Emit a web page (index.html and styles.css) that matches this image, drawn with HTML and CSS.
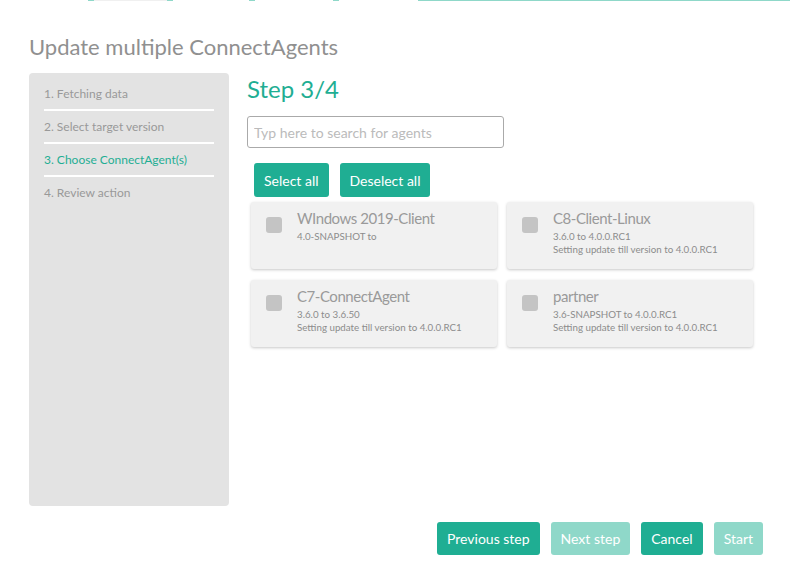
FILE: index.html
```html
<!DOCTYPE html>
<html lang="en">
<head>
  <meta charset="UTF-8" />
  <title>Update multiple ConnectAgents</title>
  <link rel="stylesheet" href="styles.css">
</head>
<body>

  <div class="topline">
    <span class="tick"></span>
    <span class="track"></span>
    <span class="tick"></span>
    <span class="gap g1"></span>
    <span class="tick"></span>
    <span class="gap g2"></span>
    <span class="tick"></span>
    <span class="gap g3"></span>
    <span class="rest"></span>
  </div>

  <h1 class="page-title">Update multiple ConnectAgents</h1>

  <div class="wizard">
    <div class="steps">
      <div class="step">1. Fetching data</div>
      <div class="step">2. Select target version</div>
      <div class="step active">3. Choose ConnectAgent(s)</div>
      <div class="step last">4. Review action</div>
    </div>

    <div class="content">
      <h2 class="step-title">Step 3/4</h2>
      <input class="search" type="text" placeholder="Typ here to search for agents" />

      <div class="select-btns">
        <button class="btn">Select all</button>
        <button class="btn">Deselect all</button>
      </div>

      <div class="agents">
        <div class="agent">
          <span class="check"></span>
          <div class="agent-info">
            <div class="agent-name">WIndows 2019-Client</div>
            <div class="agent-line">4.0-SNAPSHOT to</div>
          </div>
        </div>
        <div class="agent">
          <span class="check"></span>
          <div class="agent-info">
            <div class="agent-name">C8-Client-Linux</div>
            <div class="agent-line">3.6.0 to 4.0.0.RC1</div>
            <div class="agent-line">Setting update till version to 4.0.0.RC1</div>
          </div>
        </div>
        <div class="agent">
          <span class="check"></span>
          <div class="agent-info">
            <div class="agent-name">C7-ConnectAgent</div>
            <div class="agent-line">3.6.0 to 3.6.50</div>
            <div class="agent-line">Setting update till version to 4.0.0.RC1</div>
          </div>
        </div>
        <div class="agent">
          <span class="check"></span>
          <div class="agent-info">
            <div class="agent-name">partner</div>
            <div class="agent-line">3.6-SNAPSHOT to 4.0.0.RC1</div>
            <div class="agent-line">Setting update till version to 4.0.0.RC1</div>
          </div>
        </div>
      </div>
    </div>
  </div>

  <div class="actions">
    <button class="btn">Previous step</button>
    <button class="btn disabled">Next step</button>
    <button class="btn">Cancel</button>
    <button class="btn disabled">Start</button>
  </div>

</body>
</html>
```

FILE: styles.css
```css
* { margin: 0; padding: 0; box-sizing: border-box; }
body {
  font-family: Lato, 'Open Sans', sans-serif;
  background: #fff;
  color: #999;
  width: 790px;
  height: 564px;
  overflow: hidden;
}
.topline {
  display: flex;
  height: 1px;
  padding-left: 88px;
}
.topline span { display: block; height: 1px; }
.topline .tick { width: 6px; background: #8fd8c9; }
.topline .track { width: 73px; background: #f0f0f0; }
.topline .g1 { width: 76px; }
.topline .g2 { width: 78px; }
.topline .g3 { width: 79px; }
.topline .rest { flex-grow: 1; background: #8fd8c9; }

.page-title {
  font-weight: 400;
  font-size: 22px;
  color: #909090;
  margin: 32px 0 0 29px;
  line-height: 28px;
}
.wizard {
  display: flex;
  gap: 18px;
  margin: 12px 0 0 29px;
}
.steps {
  width: 200px;
  height: 433px;
  background: #e3e3e3;
  border-radius: 4px;
  padding: 11px 15px 0 15px;
}
.step {
  font-size: 12px;
  color: #999;
  line-height: 20px;
  padding-bottom: 5px;
  border-bottom: 2px solid #fff;
  margin-bottom: 6px;
}
.step.last { border-bottom: none; }
.step.active { color: #1fae93; }

.content {
  width: 510px;
}
.step-title {
  font-weight: 400;
  font-size: 24px;
  color: #1fae93;
  line-height: 30px;
  margin-top: 1px;
}
.search {
  display: block;
  width: 257px;
  height: 32px;
  margin-top: 12px;
  border: 1px solid #aaa;
  border-radius: 3px;
  padding: 0 6px;
  font-family: Lato, sans-serif;
  font-size: 14px;
  color: #666;
  outline: none;
}
.search::placeholder { color: #bbb; }

.btn {
  font-family: Lato, sans-serif;
  font-size: 14px;
  color: #fff;
  background: #1fae93;
  border: none;
  border-radius: 3px;
  height: 34px;
  padding: 0 10px;
  cursor: pointer;
}
.btn.disabled { background: #8fd8c9; }

.select-btns {
  display: flex;
  gap: 11px;
  margin: 15px 0 0 7px;
}
.agents {
  display: grid;
  grid-template-columns: 246px 246px;
  gap: 11px 10px;
  margin: 5px 0 0 4px;
}
.agent {
  display: flex;
  align-items: flex-start;
  gap: 15px;
  height: 67px;
  background: #f1f1f1;
  border-radius: 3px;
  box-shadow: 0 1px 3px rgba(0,0,0,0.22);
  padding: 8px 15px 0 15px;
}
.check {
  flex: none;
  width: 16px;
  height: 16px;
  margin-top: 7px;
  background: #c4c4c4;
  border-radius: 3px;
}
.agent-name {
  font-size: 15px;
  letter-spacing: -0.45px;
  color: #9a9a9a;
  line-height: 16px;
  margin-bottom: 4px;
}
.agent-line {
  font-size: 9.75px;
  color: #8c8c8c;
  line-height: 13px;
}

.actions {
  display: flex;
  justify-content: flex-end;
  gap: 11px;
  margin: 16px 27px 0 0;
}
.actions .btn { padding: 0 10px; height: 33px; }
```
